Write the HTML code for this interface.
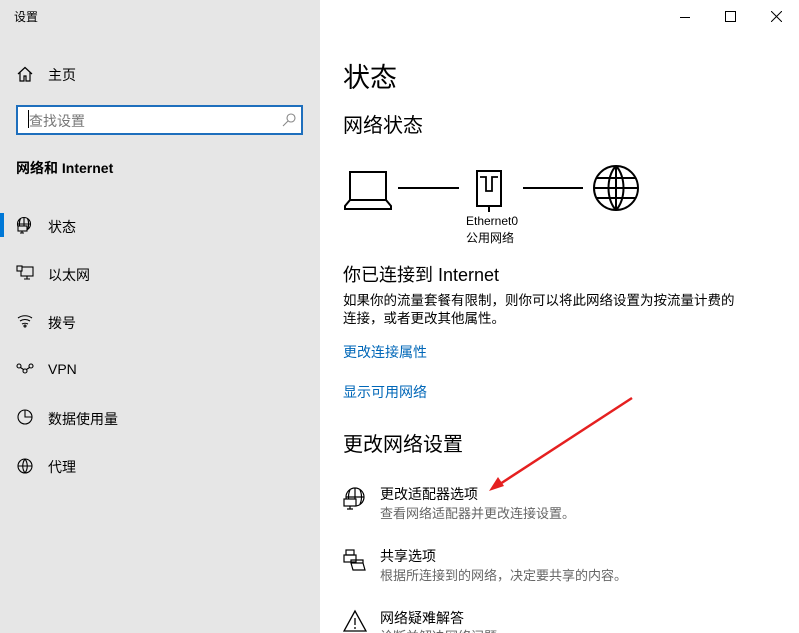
<!DOCTYPE html>
<html style="overflow:hidden;height:633px"><head><meta charset="utf-8"><style>
body{margin:0;width:799px;height:633px;overflow:hidden;font-family:"Liberation Sans","Noto Sans CJK SC",sans-serif;background:#fff;position:relative;color:#000}
.a{position:absolute;white-space:nowrap}
#side{position:absolute;left:0;top:0;width:320px;height:633px;background:#e6e6e6}
.s{font-size:14px}
.g{color:#666;font-size:13px}
.l{color:#0067b8;font-size:14px}
</style></head><body>
<div id="side">
<div class="a" style="left:14px;top:8px;font-size:12px">设置</div>
<svg class="a" style="left:16px;top:65px" width="18" height="18" viewBox="0 0 18 18" fill="none" stroke="#000" stroke-width="1.2"><path d="M2 9L9 2.5 16 9M4 7.5V16h4v-5h2v5h4V7.5"/></svg>
<div class="a s" style="left:48px;top:65px">主页</div>
<div class="a" style="left:16px;top:105px;width:283px;height:26px;border:2px solid #1e6fbd;background:#fff"></div>
<div class="a" style="left:28px;top:110px;width:1px;height:18px;background:#000"></div>
<div class="a s" style="left:29px;top:111px;color:#777">查找设置</div>
<svg class="a" style="left:281px;top:112px" width="16" height="16" viewBox="0 0 16 16" fill="none" stroke="#888" stroke-width="1.1"><circle cx="10" cy="6" r="4"/><path d="M7 9l-5 5"/></svg>
<div class="a" style="left:16px;top:158px;font-size:14px;font-weight:bold">网络和 Internet</div>
<div class="a" style="left:0;top:213px;width:4px;height:24px;background:#0078d7"></div>
<svg class="a" style="left:15px;top:216px" width="18" height="18" viewBox="0 0 18 18" fill="none" stroke="#000" stroke-width="1.1"><circle cx="9" cy="8" r="6.5"/><path d="M2.5 8h13M9 1.5v13M5.5 2.5c-1.5 3-1.5 8 0 11M12.5 2.5c1.5 3 1.5 8 0 11"/><rect x="3" y="10" width="9" height="5" fill="#e6e6e6"/><path d="M7 15v2M5 17h4"/></svg>
<div class="a s" style="left:48px;top:217px">状态</div>
<svg class="a" style="left:16px;top:265px" width="18" height="16" viewBox="0 0 18 16" fill="none" stroke="#000" stroke-width="1.1"><rect x="5" y="2" width="12" height="9"/><rect x="1" y="1" width="5" height="5" fill="#e6e6e6"/><path d="M11 11v3M8 14h6"/></svg>
<div class="a s" style="left:48px;top:265px">以太网</div>
<svg class="a" style="left:16px;top:313px" width="18" height="16" viewBox="0 0 18 16" fill="none" stroke="#000" stroke-width="1.1"><path d="M2 5c4-3 10-3 14 0M4 8c3-2 7-2 10 0M6 11c2-1 4-1 6 0"/><circle cx="9" cy="13" r="1"/></svg>
<div class="a s" style="left:48px;top:313px">拨号</div>
<svg class="a" style="left:16px;top:362px" width="18" height="14" viewBox="0 0 18 14" fill="none" stroke="#000" stroke-width="1.1"><circle cx="3" cy="4" r="2"/><circle cx="9" cy="9" r="2"/><circle cx="15" cy="4" r="2"/><path d="M4.5 5.5l3 2M10.5 7.5l3-2"/></svg>
<div class="a s" style="left:48px;top:361px">VPN</div>
<svg class="a" style="left:16px;top:408px" width="18" height="18" viewBox="0 0 18 18" fill="none" stroke="#000" stroke-width="1.1"><circle cx="9" cy="9" r="7"/><path d="M9 2v7h7"/></svg>
<div class="a s" style="left:48px;top:409px">数据使用量</div>
<svg class="a" style="left:16px;top:457px" width="18" height="18" viewBox="0 0 18 18" fill="none" stroke="#000" stroke-width="1.1"><circle cx="9" cy="9" r="7"/><path d="M2 9h14M9 2c-3 4-3 10 0 14M9 2c3 4 3 10 0 14"/></svg>
<div class="a s" style="left:48px;top:457px">代理</div>
</div>
<div class="a" style="left:680px;top:17px;width:10px;height:1px;background:#000"></div>
<div class="a" style="left:725px;top:11px;width:9px;height:9px;border:1px solid #000"></div>
<svg class="a" style="left:771px;top:11px" width="11" height="11" viewBox="0 0 11 11" stroke="#000"><path d="M0 0l11 11M11 0L0 11"/></svg>
<div class="a" style="left:343px;top:56px;font-size:27px">状态</div>
<div class="a" style="left:343px;top:109px;font-size:20px">网络状态</div>
<svg class="a" style="left:340px;top:160px" width="310" height="60" viewBox="0 0 310 60" fill="none" stroke="#000" stroke-width="2"><path d="M10 12h36v28H10zM10 40l-5 6v3h46v-3l-5-6"/><path d="M58 28h61M183 28h60"/><path d="M137 11h24v35h-24z"/><path d="M140 17h6v14h6V17h6" stroke-width="1.8"/><path d="M149 46v6"/><circle cx="276" cy="28" r="22"/><path d="M254 28h44M276 6v44M257 18h38M257 38h38M276 6c-10 10-10 34 0 44M276 6c10 10 10 34 0 44"/></svg>
<div class="a" style="left:466px;top:214px;font-size:12px">Ethernet0</div>
<div class="a" style="left:466px;top:229px;font-size:12px">公用网络</div>
<div class="a" style="left:343px;top:261px;font-size:18px">你已连接到 Internet</div>
<div class="a s" style="left:343px;top:289px;font-size:13.5px">如果你的流量套餐有限制，则你可以将此网络设置为按流量计费的</div>
<div class="a s" style="left:343px;top:307px;font-size:13.5px">连接，或者更改其他属性。</div>
<div class="a l" style="left:343px;top:342px">更改连接属性</div>
<div class="a l" style="left:343px;top:382px">显示可用网络</div>
<div class="a" style="left:343px;top:428px;font-size:20px">更改网络设置</div>
<svg class="a" style="left:343px;top:487px" width="22" height="24" viewBox="0 0 22 24" fill="none" stroke="#000" stroke-width="1.2"><circle cx="12" cy="10" r="9"/><path d="M3 10h18M12 1v18M7 3c-2 4-2 10 0 14M17 3c2 4 2 10 0 14"/><rect x="1" y="12" width="12" height="7" fill="#fff"/><path d="M7 19v3M4 22h6"/></svg>
<div class="a s" style="left:380px;top:484px">更改适配器选项</div>
<div class="a g" style="left:380px;top:503px">查看网络适配器并更改连接设置。</div>
<svg class="a" style="left:343px;top:548px" width="24" height="24" viewBox="0 0 24 24" fill="none" stroke="#000" stroke-width="1.2"><rect x="3" y="2" width="8" height="5"/><rect x="1" y="7" width="12" height="7"/><path d="M8 12h12v3H8zM8 15l2 7h12l-2-7"/></svg>
<div class="a s" style="left:380px;top:546px">共享选项</div>
<div class="a g" style="left:380px;top:565px">根据所连接到的网络，决定要共享的内容。</div>
<svg class="a" style="left:343px;top:609px" width="24" height="24" viewBox="0 0 24 24" fill="none" stroke="#000" stroke-width="1.3"><path d="M12 2L1 22h22z"/><path d="M12 9v7M12 18v2"/></svg>
<div class="a s" style="left:380px;top:608px">网络疑难解答</div>
<div class="a g" style="left:380px;top:626px">诊断并解决网络问题</div>
<svg class="a" style="left:480px;top:390px" width="160" height="110" viewBox="480 390 160 110"><path d="M632 398L500 484" stroke="#e52020" stroke-width="2.5"/><path d="M489 491l9-14 6 9z" fill="#e52020"/></svg>
</body></html>
